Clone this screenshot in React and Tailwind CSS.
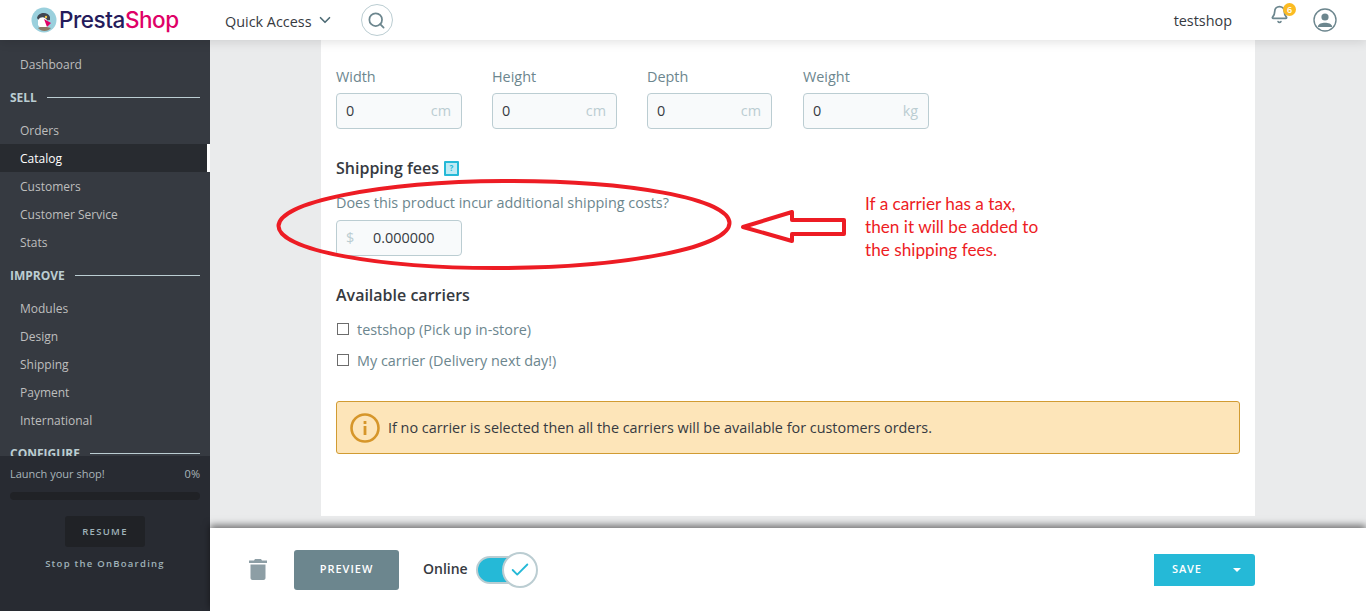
import React from "react";
import { Search, ChevronDown, Bell, Check } from "lucide-react";

const sidebar = [
  { name: "Dashboard" },
  { title: "SELL", line: "w-[153px]" },
  { name: "Orders" },
  { name: "Catalog", active: true },
  { name: "Customers" },
  { name: "Customer Service" },
  { name: "Stats" },
  { title: "IMPROVE", line: "w-[125px]" },
  { name: "Modules" },
  { name: "Design" },
  { name: "Shipping" },
  { name: "Payment" },
  { name: "International" },
  { title: "CONFIGURE", line: "w-[110px]" },
];

const dimensions = [
  { label: "Width", unit: "cm", width: "w-[126px]", col: "w-[156px]" },
  { label: "Height", unit: "cm", width: "w-[125px]", col: "w-[155px]" },
  { label: "Depth", unit: "cm", width: "w-[125px]", col: "w-[156px]" },
  { label: "Weight", unit: "kg", width: "w-[126px]", col: "w-[126px]" },
];

const Logo = () => (
  <div className="flex items-center gap-[2px]">
    <svg width="26" height="26" viewBox="0 0 26 26">
      <circle cx="13" cy="13" r="12.5" fill="#9ad0dd" />
      <path d="M6 11 C7 5 17 4 19 10 L19 13 L8 14 Z" fill="#3f4651" />
      <path d="M7 13 C10 9 14 10 16 13 L17 20 C14 23 9 22 7 18 Z" fill="#ffffff" />
      <path d="M13 12 L20 16 L16 20 Z" fill="#df0067" />
      <circle cx="15" cy="10" r="1.2" fill="#f4c542" />
      <path d="M7 21 C10 25 17 25 20 21 L16 20 L9 20 Z" fill="#8a7a66" />
    </svg>
    <span className="font-['Inter',sans-serif] text-[22.5px] font-medium tracking-[-0.45px] leading-none">
      <span className="text-[#251b5b]">Presta</span>
      <span className="text-[#df0067]">Shop</span>
    </span>
  </div>
);

const Header = () => (
  <header className="relative z-20 flex h-10 items-center bg-white shadow-[0_2px_10px_rgba(0,0,0,0.12)]">
    <div className="ml-[31px] w-[194px]">
      <Logo />
    </div>
    <div className="flex items-center pt-[3px] text-[14.4px] text-[#363a41]">
      Quick Access
      <ChevronDown className="ml-[4px] -mt-[3px] text-[#4d6b75]" size={18} strokeWidth={2.2} />
    </div>
    <button className="ml-[27px] flex size-8 items-center justify-center rounded-full border border-[#bbcdd2]">
      <Search className="text-[#6c868e]" size={19} strokeWidth={2.2} />
    </button>
    <div className="ml-auto flex items-center">
      <span className="pt-[2px] text-[14.4px] text-[#363a41]">testshop</span>
      <div className="relative ml-[38px] -mt-[12px]">
        <Bell className="text-[#6c868e]" size={19} strokeWidth={2.2} />
        <span className="absolute -right-[7px] -top-[2px] flex size-[13px] items-center justify-center rounded-full bg-[#fbbb22] text-[9px] font-semibold leading-none text-white">
          6
        </span>
      </div>
      <svg className="ml-[24px] mr-[29px]" width="24" height="24" viewBox="0 0 24 24">
        <circle cx="12" cy="12" r="11" fill="none" stroke="#6c868e" strokeWidth="1.4" />
        <circle cx="12" cy="9" r="3.6" fill="#6c868e" />
        <path d="M5 18 C6 13.5 18 13.5 19 18 L19 19 L5 19 Z" fill="#6c868e" />
      </svg>
    </div>
  </header>
);

const Sidebar = () => (
  <aside className="flex w-[210px] shrink-0 flex-col bg-[#363a41]">
    <nav className="flex-1 overflow-hidden pt-[10px]">
      {sidebar.map((item) =>
        item.title ? (
          <div key={item.title} className="flex h-[38px] items-center justify-between pl-[10px] pr-[10px]">
            <span className="pt-[2px] text-xs font-bold text-[#bbcdd2]">{item.title}</span>
            <span className={`h-px bg-[#bbcdd2] ${item.line}`} />
          </div>
        ) : (
          <div
            key={item.name}
            className={`flex h-7 items-center pl-5 pt-[2px] text-xs ${
              item.active ? "border-r-[3px] border-white bg-[#282b30] text-white" : "text-[#bebebe]"
            }`}
          >
            {item.name}
          </div>
        )
      )}
    </nav>
    <div className="flex h-[155px] shrink-0 flex-col bg-[#282b32] px-[10px]">
      <div className="mt-[10px] flex justify-between text-[11px] leading-4 text-[#a9b5ba]">
        <span>Launch your shop!</span>
        <span>0%</span>
      </div>
      <div className="mt-[10px] h-2 rounded-full bg-[#202226]" />
      <button className="mx-auto mt-4 h-[31px] w-20 rounded-[3px] bg-[#202226] pt-[2px] text-[9.5px] font-semibold tracking-[1.3px] text-[#9fb2b9]">
        RESUME
      </button>
      <div className="mt-[10px] text-center text-[9.5px] font-semibold tracking-[1.25px] text-[#9fb2b9]">
        Stop the OnBoarding
      </div>
    </div>
  </aside>
);

const Checkbox = ({ label }) => (
  <label className="flex h-[31px] items-center text-[14.4px] text-[#6c868e]">
    <span className="mr-[8px] ml-px size-3 -mt-[2px] border border-[#6c6c6c] bg-white" />
    {label}
  </label>
);

const Card = () => (
  <section className="flex-1 bg-white px-[15px] pt-[28px]">
    <div className="flex">
      {dimensions.map((d) => (
        <div key={d.label} className={d.col}>
          <div className="h-[25px] text-[14.4px] leading-[18px] text-[#6c868e]">{d.label}</div>
          <div
            className={`flex h-9 items-center justify-between rounded border border-[#bbcdd2] bg-[#f8fafb] pl-[9px] pr-[10px] text-[14.4px] ${d.width}`}
          >
            <span className="text-[#363a41]">0</span>
            <span className="text-[#bbcdd2]">{d.unit}</span>
          </div>
        </div>
      ))}
    </div>
    <div className="mt-[28px] flex h-[22px] items-center text-base font-semibold text-[#363a41]">
      Shipping fees
      <span className="ml-[5px] flex size-[15px] items-center justify-center rounded-[1px] border-2 border-[#25b9d7] bg-[#bfeaf4] text-[8px] font-bold leading-none text-[#25b9d7]">
        ?
      </span>
    </div>
    <div className="mt-[14px] h-[27px] text-[14.4px] leading-5 text-[#6c868e]">
      Does this product incur additional shipping costs?
    </div>
    <div className="flex h-9 w-[126px] items-center rounded border border-[#bbcdd2] bg-[#f8fafb] pl-[9px] text-[14.4px]">
      <span className="w-[27px] text-[#bbcdd2]">$</span>
      <span className="text-[#363a41]">0.000000</span>
    </div>
    <div className="mt-[28px] flex h-[22px] items-center text-base font-semibold text-[#363a41]">
      Available carriers
    </div>
    <div className="mt-[8px]">
      <Checkbox label="testshop (Pick up in-store)" />
      <Checkbox label="My carrier (Delivery next day!)" />
    </div>
    <div className="mt-[25px] flex h-[53px] items-center rounded-[3px] border border-[#d19b32] bg-[#fde5b9] pl-[13px] text-[14.4px] text-[#363a41]">
      <svg className="mr-[8px]" width="30" height="30" viewBox="0 0 30 30">
        <circle cx="15" cy="15" r="13.5" fill="none" stroke="#d6962a" strokeWidth="2.6" />
        <rect x="13.6" y="13" width="2.8" height="9" fill="#d6962a" />
        <rect x="13.6" y="8" width="2.8" height="3" fill="#d6962a" />
      </svg>
      If no carrier is selected then all the carriers will be available for customers orders.
    </div>
  </section>
);

const Footer = () => (
  <footer className="relative z-10 flex h-[83px] shrink-0 items-center bg-white pl-[38px] pr-[111px] shadow-[0_-3px_7px_rgba(0,0,0,0.5)]">
    <svg className="-mt-[1px]" width="20" height="24" viewBox="0 0 20 24">
      <path d="M7 2 H13 L14 3.5 H19 V6 H1 V3.5 H6 Z M2.5 7.5 H17.5 V21 C17.5 22 16.5 23 15.5 23 H4.5 C3.5 23 2.5 22 2.5 21 Z" fill="#8d9ea5" />
    </svg>
    <button className="ml-[26px] h-10 w-[105px] rounded-[3px] bg-[#6c868e] text-[11px] font-semibold tracking-[1px] text-white">
      PREVIEW
    </button>
    <span className="ml-6 -mt-[1px] text-sm font-semibold text-[#363a41]">Online</span>
    <div className="relative ml-2 h-7 w-[62px]">
      <span className="absolute left-0 top-0 h-7 w-[52px] rounded-full border-2 border-[#bbcdd2] bg-[#25b9d7]" />
      <span className="absolute right-0 -top-[4px] flex size-9 items-center justify-center rounded-full border-2 border-[#bbcdd2] bg-white">
        <Check className="text-[#25b9d7]" size={22} strokeWidth={2} />
      </span>
    </div>
    <div className="ml-auto flex h-8 w-[101px] items-center rounded-r-[3px] bg-[#25b9d7] pl-[18px] text-[11px] font-semibold tracking-[0.9px] text-white">
      SAVE
      <span className="ml-auto mr-[14px] border-x-4 border-t-4 border-x-transparent border-t-white" />
    </div>
  </footer>
);

// red hand drawn notes on top of the page
const Notes = () => (
  <>
    <svg className="pointer-events-none absolute left-0 top-0 z-30" width="1366" height="611">
      <ellipse cx="504" cy="224.5" rx="225.5" ry="43.5" fill="none" stroke="#ed1c24" strokeWidth="4" transform="rotate(-0.4 504 224)" />
      <path d="M743 227 L792 212 L792 220 L844 220 L844 234 L792 234 L792 241 Z" fill="none" stroke="#ed1c24" strokeWidth="4" strokeLinejoin="round" />
    </svg>
    <div className="absolute left-[865px] top-[192px] z-30 font-['Lato',sans-serif] text-[17.2px] leading-[23px] text-[#ed1c24]">
      If a carrier has a tax,
      <br />
      then it will be added to
      <br />
      the shipping fees.
    </div>
  </>
);

export default function App() {
  return (
    <div className="relative flex h-[611px] w-[1366px] flex-col overflow-hidden font-['Open_Sans',sans-serif]">
      <Header />
      <div className="flex min-h-0 flex-1">
        <Sidebar />
        <main className="flex min-w-0 flex-1 flex-col bg-[#eaebec]">
          <div className="flex min-h-0 flex-1 flex-col px-[111px] pb-3">
            <Card />
          </div>
          <Footer />
        </main>
      </div>
      <Notes />
    </div>
  );
}
